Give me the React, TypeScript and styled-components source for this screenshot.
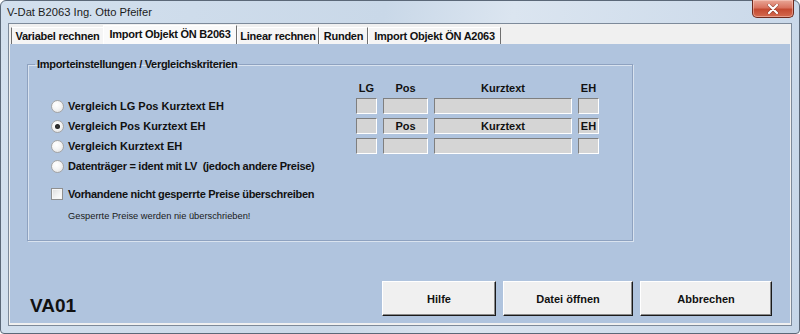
import { Fragment } from "react";
import styled, { createGlobalStyle } from "styled-components";

const GlobalStyle = createGlobalStyle`
  html, body {
    margin: 0;
    padding: 0;
  }
  body {
    width: 800px;
    height: 334px;
    overflow: hidden;
    background: #ffffff;
  }
`;

const Window = styled.div`
  box-sizing: border-box;
  width: 800px;
  height: 334px;
  display: flex;
  flex-direction: column;
  padding: 0 7px 7px 7px;
  border: 1px solid #5b6878;
  border-radius: 6px 6px 4px 4px;
  background: linear-gradient(100deg, #d3e0ee 0%, #c9d8e8 45%, #dbe5f0 60%, #c6d6e8 100%);
  font-family: "Liberation Sans", Arial, sans-serif;
`;

const TitleBar = styled.div`
  height: 22px;
  display: flex;
  align-items: flex-start;
  justify-content: space-between;
`;

const Title = styled.span`
  font-family: "Liberation Sans", Arial, sans-serif;
  font-size: 11.2px;
  line-height: 23px;
  color: #1b1b1b;
  margin-left: -1px;
`;

const CloseButton = styled.div`
  box-sizing: border-box;
  width: 42px;
  height: 18px;
  margin-top: -1px;
  margin-right: -2px;
  border: 1px solid #6e2a1e;
  border-top: none;
  border-radius: 0 0 5px 5px;
  background: linear-gradient(180deg, #e9a797 0%, #d9735f 45%, #c44a31 55%, #d46a4f 100%);
  box-shadow: inset 0 0 0 1px rgba(255, 220, 210, 0.45);
  display: flex;
  align-items: center;
  justify-content: center;
`;

const Client = styled.div`
  flex: 1;
  display: flex;
  flex-direction: column;
  border: 1px solid #7d8a9a;
  background: #f0f0f0;
  padding: 0 1px 2px 1px;
`;

const TabStrip = styled.div`
  height: 20px;
  display: flex;
  align-items: flex-end;
  padding-left: 1px;
`;

const Tab = styled.div<{ $active?: boolean; $first?: boolean; $w: number }>`
  box-sizing: border-box;
  width: ${(p) => p.$w}px;
  height: ${(p) => (p.$active ? 19 : 17)}px;
  padding-bottom: ${(p) => (p.$active ? 3 : 1)}px;
  margin-left: ${(p) => (p.$active ? -1 : 0)}px;
  display: flex;
  align-items: center;
  justify-content: center;
  font-size: 11px;
  font-weight: bold;
  letter-spacing: -0.25px;
  color: #111;
  background: ${(p) => (p.$active ? "#fafafa" : "#f5f5f5")};
  border-top: 1px solid #ffffff;
  border-left: 1px solid ${(p) => (p.$first ? "#6f6f6f" : "#ffffff")};
  border-right: 1px solid #6f6f6f;
  white-space: nowrap;
  position: relative;
  z-index: ${(p) => (p.$active ? 1 : 0)};
`;

const TabPanel = styled.div`
  flex: 1;
  display: flex;
  flex-direction: column;
  background: #b0c4de;
`;

const GroupBox = styled.fieldset`
  box-sizing: border-box;
  width: 606px;
  height: 183px;
  margin: 14px 0 0 17px;
  padding: 11px 0 0 7px;
  border: 1px solid #8ea2c0;
  box-shadow: 1px 1px 0 #d9e3ef, inset 1px 1px 0 #d9e3ef;
  min-width: 0;
`;

const Legend = styled.legend`
  padding: 0 2px;
  font-size: 11px;
  line-height: 13px;
  font-weight: bold;
  letter-spacing: -0.3px;
  color: #111;
`;

const Matrix = styled.div`
  display: grid;
  grid-template-columns: 299px 21px 45px 138px 21px;
  grid-auto-rows: 16px;
  grid-template-rows: 12px;
  column-gap: 6px;
  row-gap: 4px;
  margin-left: 16px;
  align-items: center;
`;

const ColHead = styled.div`
  font-size: 11px;
  font-weight: bold;
  color: #111;
  text-align: center;
  line-height: 12px;
`;

const Option = styled.label<{ $tight?: boolean }>`
  display: flex;
  align-items: center;
  gap: 4px;
  font-size: 11px;
  font-weight: bold;
  letter-spacing: ${(p) => (p.$tight ? "-0.28px" : "0")};
  color: #111;
  white-space: pre;
`;

const Radio = styled.span<{ $checked?: boolean }>`
  box-sizing: border-box;
  width: 13px;
  height: 13px;
  border-radius: 50%;
  border: 1px solid #a4a4a4;
  background: radial-gradient(circle at 40% 35%, #ffffff 0%, #f5f5f5 45%, #dadada 100%);
  display: flex;
  align-items: center;
  justify-content: center;
  &::after {
    content: "";
    width: 5px;
    height: 5px;
    border-radius: 50%;
    background: ${(p) => (p.$checked ? "radial-gradient(circle, #3a3a3a 0%, #111 100%)" : "transparent")};
  }
`;

const Field = styled.div`
  box-sizing: border-box;
  height: 16px;
  border: 1px solid;
  border-color: #7f7f7f #ffffff #ffffff #7f7f7f;
  background: #d5d5d5;
  font-size: 11px;
  font-weight: bold;
  color: #111;
  text-align: center;
  line-height: 14px;
`;

const CheckRow = styled.label`
  display: flex;
  align-items: center;
  gap: 5px;
  margin: 14px 0 0 16px;
  font-size: 11px;
  font-weight: bold;
  letter-spacing: -0.3px;
  color: #111;
`;

const CheckBox = styled.span`
  box-sizing: border-box;
  width: 12px;
  height: 12px;
  border: 1px solid #8f8f8f;
  background: linear-gradient(135deg, #dcdcdc 0%, #f4f4f4 60%, #ffffff 100%);
  box-shadow: inset 0 0 0 1px #f6f6f6;
`;

const Note = styled.div`
  margin: 11px 0 0 33px;
  font-size: 9.3px;
  color: #1a1a1a;
`;

const Footer = styled.div`
  margin-top: auto;
  display: flex;
  align-items: flex-end;
  padding: 0 18px 7px 20px;
`;

const Code = styled.div`
  font-size: 19px;
  font-weight: bold;
  line-height: 19px;
  color: #111;
  margin-bottom: 1px;
  flex: 1;
`;

const Buttons = styled.div`
  display: flex;
  gap: 7px;
`;

const Button = styled.button<{ $w: number }>`
  box-sizing: border-box;
  width: ${(p) => p.$w}px;
  height: 35px;
  border: 1px solid;
  border-color: #ffffff #1a1a1a #1a1a1a #ffffff;
  box-shadow: inset -1px -1px 0 #8a8a8a;
  background: #f0f0f0;
  font-family: "Liberation Sans", Arial, sans-serif;
  font-size: 11px;
  font-weight: bold;
  color: #111;
  padding: 0;
`;

const rows = [
  { label: "Vergleich LG Pos Kurztext EH", checked: false, fields: ["", "", "", ""] },
  { label: "Vergleich Pos Kurztext EH", checked: true, fields: ["", "Pos", "Kurztext", "EH"] },
  { label: "Vergleich Kurztext EH", checked: false, fields: ["", "", "", ""] },
];

const tabs = [
  { label: "Variabel rechnen", w: 93 },
  { label: "Import Objekt ÖN B2063", w: 134 },
  { label: "Linear rechnen", w: 82 },
  { label: "Runden", w: 49 },
  { label: "Import Objekt ÖN A2063", w: 133 },
];

export default function App() {
  return (
    <>
      <GlobalStyle />
      <Window>
        <TitleBar>
          <Title>V-Dat B2063 Ing. Otto Pfeifer</Title>
          <CloseButton>
            <svg width="12" height="10" viewBox="0 0 12 10">
              <path d="M2 1 L10 9 M10 1 L2 9" stroke="#5a1a10" strokeWidth="3.2" strokeLinecap="round" opacity="0.5" />
              <path d="M2 1 L10 9 M10 1 L2 9" stroke="#ffffff" strokeWidth="2.2" strokeLinecap="round" />
            </svg>
          </CloseButton>
        </TitleBar>
        <Client>
          <TabStrip>
            {tabs.map((t, i) => (
              <Tab key={t.label} $w={t.w} $first={i === 0} $active={i === 1}>
                {t.label}
              </Tab>
            ))}
          </TabStrip>
          <TabPanel>
            <GroupBox>
              <Legend>Importeinstellungen / Vergleichskriterien</Legend>
              <Matrix>
                <div />
                <ColHead>LG</ColHead>
                <ColHead>Pos</ColHead>
                <ColHead>Kurztext</ColHead>
                <ColHead>EH</ColHead>
                {rows.map((r) => (
                  <Fragment key={r.label}>
                    <Option>
                      <Radio $checked={r.checked} />
                      {r.label}
                    </Option>
                    {r.fields.map((f, j) => (
                      <Field key={j}>{f}</Field>
                    ))}
                  </Fragment>
                ))}
                <Option $tight>
                  <Radio />
                  {"Datenträger = ident mit LV  (jedoch andere Preise)"}
                </Option>
              </Matrix>
              <CheckRow>
                <CheckBox />
                Vorhandene nicht gesperrte Preise überschreiben
              </CheckRow>
              <Note>Gesperrte Preise werden nie überschrieben!</Note>
            </GroupBox>
            <Footer>
              <Code>VA01</Code>
              <Buttons>
                <Button $w={114}>Hilfe</Button>
                <Button $w={130}>Datei öffnen</Button>
                <Button $w={132}>Abbrechen</Button>
              </Buttons>
            </Footer>
          </TabPanel>
        </Client>
      </Window>
    </>
  );
}
